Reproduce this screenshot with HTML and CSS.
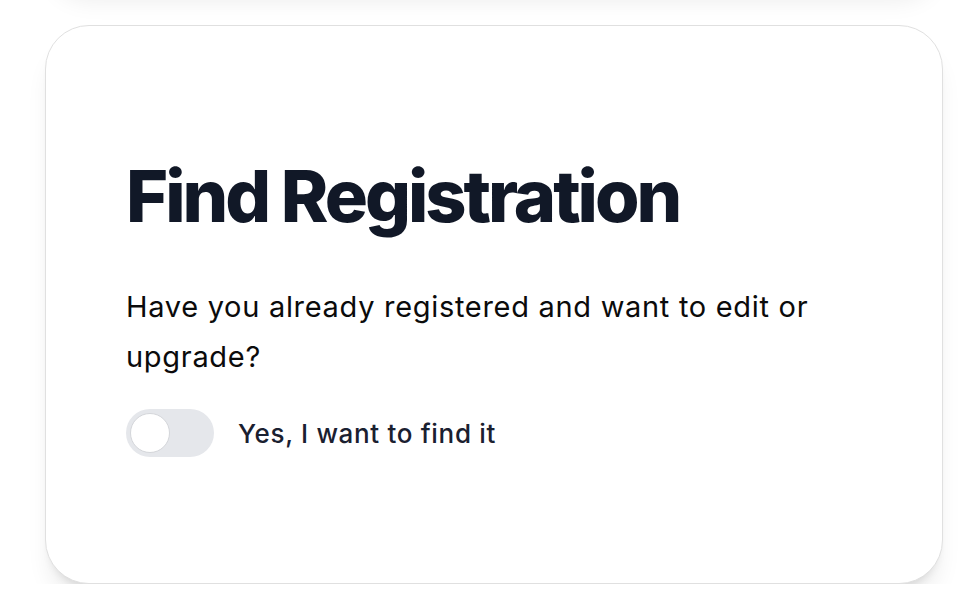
FILE: index.html
```html
<!DOCTYPE html>
<html lang="en">
<head>
<meta charset="utf-8">
<title>Find Registration</title>
<link rel="stylesheet" href="styles.css">
</head>
<body>
<div class="page">
  <div class="card card-prev"></div>
  <section class="card">
    <h1 class="title">Find Registration</h1>
    <p class="lead">Have you already registered and want to edit or upgrade?</p>
    <label class="toggle-row">
      <span class="toggle"><span class="knob"></span></span>
      <span class="toggle-label">Yes, I want to find it</span>
    </label>
  </section>
</div>
</body>
</html>
```
FILE: styles.css
```css
* { box-sizing: border-box; }
html, body { margin: 0; padding: 0; background: #ffffff; }
body { font-family: Inter, "Noto Sans", sans-serif; color: #111827; overflow: hidden; }
.page { padding: 0 27px 0 45px; display: flex; flex-direction: column; gap: 40px; margin-top: -225px; }
.card {
  background: #fff;
  border: 1.5px solid #e0e0e0;
  border-radius: 44px;
  box-shadow: 0 20px 25px -5px rgba(0,0,0,0.08), 0 8px 10px -6px rgba(0,0,0,0.12);
  padding: 134px 80px 126px 80px;
}
.card-prev { height: 210px; padding: 0; }
.title {
  margin: 0;
  font-size: 72px;
  line-height: 72px;
  font-weight: 800;
  letter-spacing: -0.042em;
  color: #111827;
}
.lead {
  margin: 50px 0 0 0;
  font-size: 29px;
  line-height: 50px;
  letter-spacing: 0.024em;
  color: #0b0b0b;
  font-weight: 400;
}
.toggle-row { display: flex; align-items: center; gap: 24px; margin-top: 27px; }
.toggle {
  width: 88px; height: 48px; border-radius: 24px; background: #e5e7eb;
  display: flex; align-items: center; padding: 0 4px; flex: none;
}
.knob {
  width: 40px; height: 40px; border-radius: 50%; background: #fff;
  border: 1.5px solid #d4d6da;
}
.toggle-label { font-size: 26px; font-weight: 500; letter-spacing: 0.026em; color: #1a2030; }
```
